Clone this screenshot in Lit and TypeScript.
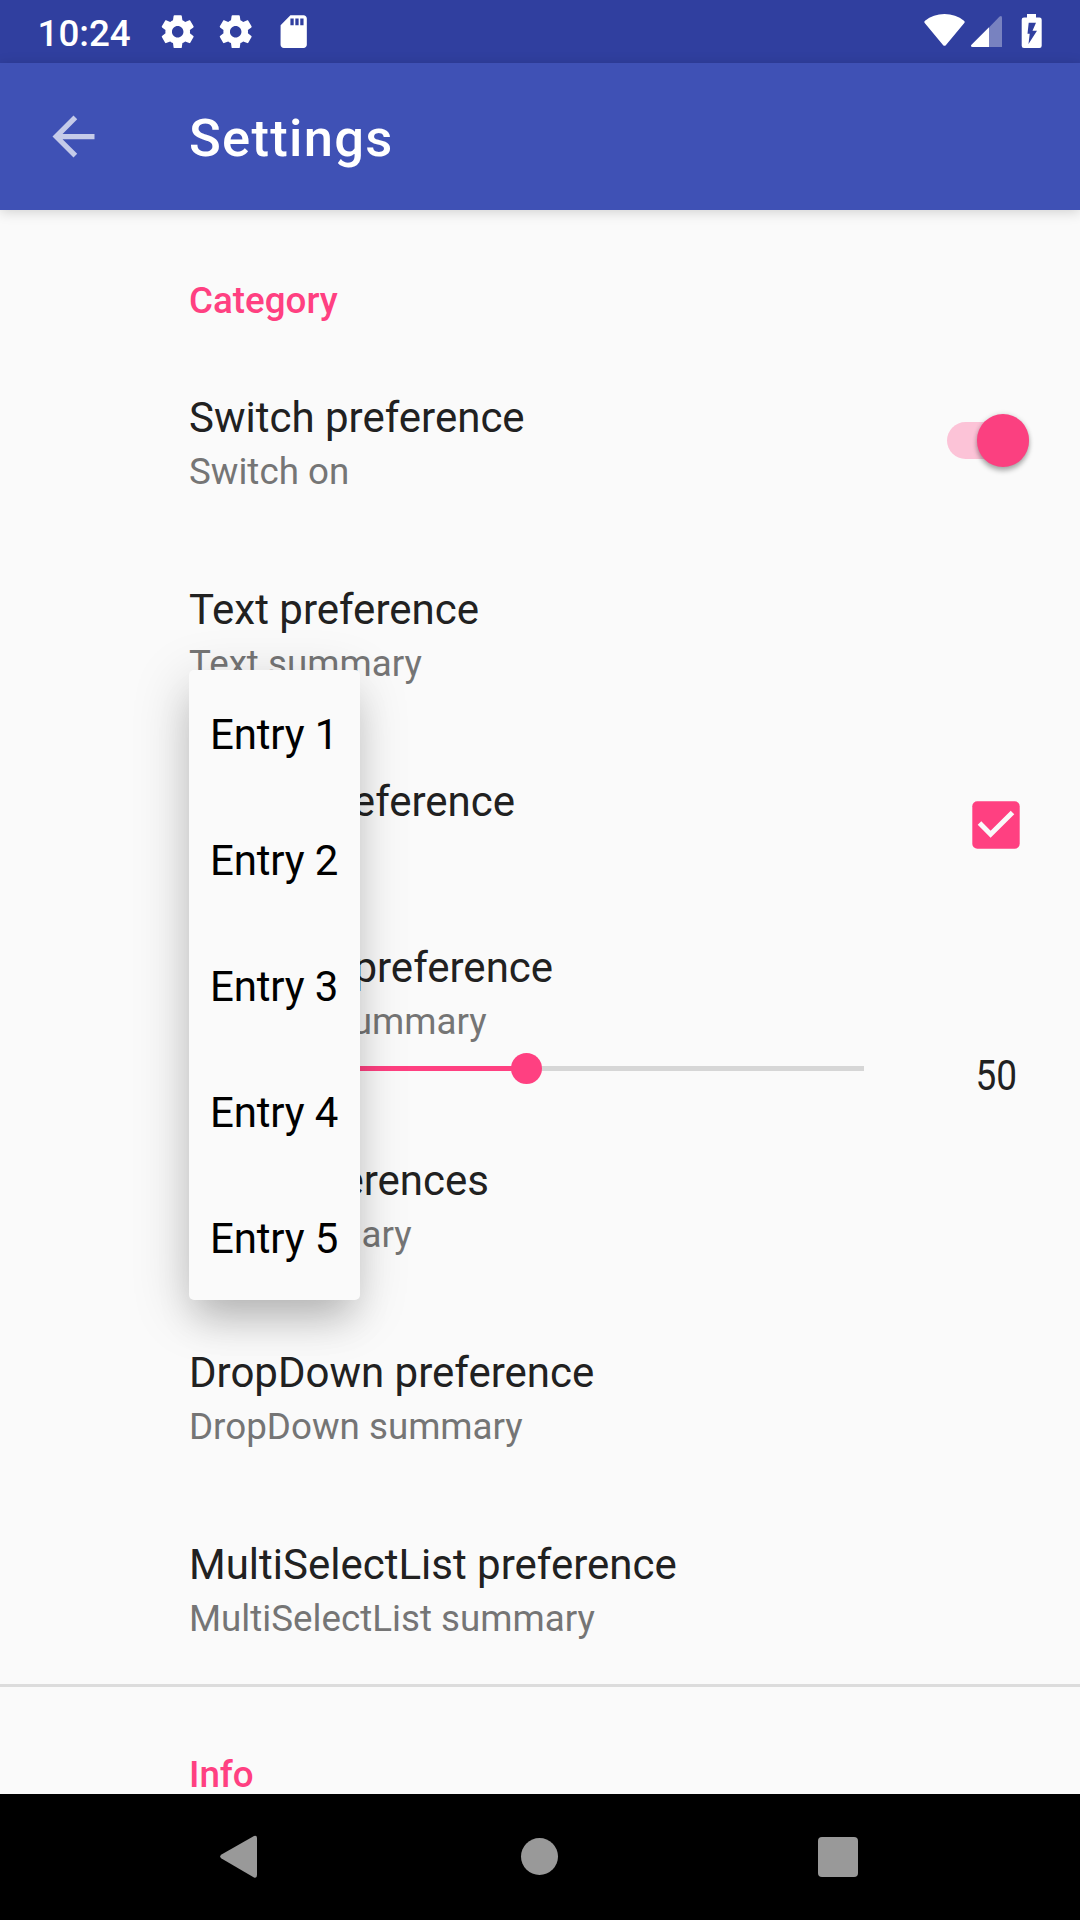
import { LitElement, html, css, svg, nothing } from "lit";
import { customElement, property } from "lit/decorators.js";

const GEAR =
  "M19.43 12.98c.04-.32.07-.64.07-.98s-.03-.66-.07-.98l2.11-1.65c.19-.15.24-.42.12-.64l-2-3.46c-.12-.22-.39-.3-.61-.22l-2.49 1c-.52-.4-1.08-.73-1.69-.98l-.38-2.65C14.46 2.18 14.25 2 14 2h-4c-.25 0-.46.18-.49.42l-.38 2.65c-.61.25-1.17.59-1.69.98l-2.49-1c-.23-.09-.49 0-.61.22l-2 3.46c-.13.22-.07.49.12.64l2.11 1.65c-.04.32-.07.65-.07.98s.03.66.07.98l-2.11 1.65c-.19.15-.24.42-.12.64l2 3.46c.12.22.39.3.61.22l2.49-1c.52.4 1.08.73 1.69.98l.38 2.65c.03.24.24.42.49.42h4c.25 0 .46-.18.49-.42l.38-2.65c.61-.25 1.17-.59 1.69-.98l2.49 1c.23.09.49 0 .61-.22l2-3.46c.12-.22.07-.49-.12-.64l-2.11-1.65zM12 15.5c-1.93 0-3.5-1.57-3.5-3.5s1.57-3.5 3.5-3.5 3.5 1.57 3.5 3.5-1.57 3.5-3.5 3.5z";

@customElement("status-bar")
class StatusBar extends LitElement {
  static styles = css`
    :host {
      display: flex;
      height: 63px;
      background: #303f9f;
      color: #fff;
      align-items: flex-start;
      font: 500 36.75px/43px Roboto, "Liberation Sans", sans-serif;
    }
    .clock {
      margin: 12px 0 0 37.5px;
      width: 120.5px;
    }
    .notes {
      display: flex;
      gap: 18.6px;
      margin-top: 11.7px;
    }
    .glyph {
      display: block;
      width: 39.4px;
      height: 39.4px;
      fill: #fff;
    }
    .system {
      display: block;
      margin-left: auto;
      width: 160px;
      height: 63px;
      fill: #fff;
    }
  `;
  render() {
    const gear = svg`<path d=${GEAR} />`;
    return html`
      <div class="clock">10:24</div>
      <div class="notes">
        <svg class="glyph" viewBox="0 0 24 24">${gear}</svg>
        <svg class="glyph" viewBox="0 0 24 24">${gear}</svg>
        <svg class="glyph" viewBox="0 0 24 24">
          <path d="M18 2h-8L4.02 8 4 20c0 1.1.9 2 2 2h12c1.1 0 2-.9 2-2V4c0-1.1-.9-2-2-2zm-6 6h-2V4h2v4zm3 0h-2V4h2v4zm3 0h-2V4h2v4z" />
        </svg>
      </div>
      <svg class="system" viewBox="920 0 160 63">
        <path d="M943.2 45.2 924.5 22.8Q923.800 21.6 925 20.8C930.5 16.3 937 14 944.5 14S958.5 16.3 964 20.8Q965.2 21.6 964.5 22.8L945.8 45.2Q944.5 46.5 943.2 45.2Z" />
        <path opacity=".35" d="M989 27.5 999.6 16.6Q1002 14.9 1002 18V47H989Z" />
        <path d="M989 27.3V47H972.5Q970 46.7 971.5 44.8Z" />
        <path fill-rule="evenodd" d="M1027 14H1036V17.5H1039.5Q1041.7 17.5 1041.7 19.7V45.7Q1041.7 48 1039.5 48H1024Q1021.7 48 1021.7 45.7V19.7Q1021.7 17.5 1024 17.5H1027ZM1028.7 22.7 1027.5 33.7H1029.7L1028.5 44 1037 30.8H1032.5L1036 22.7Z" />
      </svg>
    `;
  }
}

@customElement("preference-row")
class PreferenceRow extends LitElement {
  @property() heading = "";
  @property() summary = "";
  @property({ type: Boolean, reflect: true }) compact = false;

  static styles = css`
    :host {
      display: flex;
      box-sizing: border-box;
      height: 192px;
      padding: 49px 51px 0 189px;
    }
    :host([compact]) {
      height: 187px;
      padding-top: 23px;
    }
    .text {
      flex: 1;
      min-width: 0;
    }
    .heading {
      font-size: 42px;
      line-height: 49px;
      color: #212121;
      white-space: nowrap;
    }
    .summary {
      margin-top: 8px;
      font-size: 36.75px;
      line-height: 43px;
      color: #757575;
      white-space: nowrap;
    }
  `;
  render() {
    return html`
      <div class="text">
        <div class="heading">${this.heading}</div>
        ${this.summary ? html`<div class="summary">${this.summary}</div>` : nothing}
        <slot name="below"></slot>
      </div>
      <slot name="widget"></slot>
    `;
  }
}

@customElement("app-root")
class AppRoot extends LitElement {
  static styles = css`
    :host {
      display: flex;
      flex-direction: column;
      width: 1080px;
      height: 1920px;
      overflow: hidden;
      background: #fafafa;
      font-family: Roboto, "Liberation Sans", sans-serif;
    }
    .toolbar {
      position: relative;
      z-index: 1;
      display: flex;
      align-items: center;
      flex: none;
      height: 147px;
      background: #3f51b5;
      color: #fff;
      box-shadow: 0 2px 12px rgba(0, 0, 0, 0.17);
    }
    .arrow {
      width: 63px;
      height: 63px;
      margin: 0 84px 0 42px;
      fill: rgba(255, 255, 255, 0.7);
    }
    .title {
      font-size: 52.5px;
      font-weight: 500;
      line-height: 62px;
      letter-spacing: 1.3px;
      padding-top: 3px;
    }
    .content {
      position: relative;
      flex: 1;
      min-height: 0;
      overflow: hidden;
    }
    .category {
      box-sizing: border-box;
      height: 134px;
      padding: 69px 0 0 189px;
      color: #ff4081;
      font-size: 36.75px;
      font-weight: 500;
      line-height: 43px;
    }
    .divided {
      border-top: 3px solid #dcdcdc;
      padding-top: 66px;
      margin-top: 1px;
    }
    .switch {
      display: flex;
      align-items: center;
      justify-content: flex-end;
      box-sizing: border-box;
      width: 82.5px;
      height: 37px;
      margin-top: 29px;
      border-radius: 19px;
      background: #fcc3d7;
    }
    .thumb {
      flex: none;
      width: 52.5px;
      height: 52.5px;
      border-radius: 50%;
      background: #fb4080;
      box-shadow: 0 4px 5px rgba(0, 0, 0, 0.28), 0 0 5px rgba(0, 0, 0, 0.14);
    }
    .check {
      width: 48px;
      height: 48px;
      margin: 24px 9.5px 0 0;
    }
    .slider {
      display: flex;
      align-items: center;
      width: 675px;
      height: 31px;
      margin-top: 10px;
    }
    .filled {
      height: 5px;
      background: #ff4081;
    }
    .knob {
      flex: none;
      width: 31px;
      height: 31px;
      margin: 0 -15.5px;
      border-radius: 50%;
      background: #ff4081;
      z-index: 1;
    }
    .rest {
      flex: 1;
      height: 5px;
      background: #d6d6d6;
    }
    .value {
      padding: 108px 10px 0 0;
      font-size: 42px;
      line-height: 49px;
      color: #212121;
      transform: scaleX(0.88);
      transform-origin: 50% 50%;
    }
    .menu {
      position: absolute;
      left: 189px;
      top: 460px;
      width: 171px;
      height: 630px;
      border-radius: 5px;
      background: #fafafa;
      box-shadow: 0 26px 36px -8px rgba(0, 0, 0, 0.17), -4px 12px 54px rgba(0, 0, 0, 0.17);
    }
    .entry {
      display: flex;
      align-items: center;
      box-sizing: border-box;
      height: 126px;
      padding: 2px 0 0 21px;
      font-size: 42px;
      letter-spacing: -0.15px;
      color: #000;
    }
    .nav {
      flex: none;
      display: flex;
      align-items: center;
      justify-content: space-around;
      height: 126px;
      padding: 0 90px;
      background: #000;
    }
    .key {
      width: 60px;
      height: 60px;
      fill: #999;
    }
  `;

  private level = 50;

  render() {
    return html`
      <status-bar></status-bar>
      <header class="toolbar">
        <svg class="arrow" viewBox="0 0 24 24">
          <path d="M20 11H7.83l5.59-5.59L12 4l-8 8 8 8 1.41-1.41L7.83 13H20v-2z" />
        </svg>
        <div class="title">Settings</div>
      </header>
      <main class="content">
        <div class="category">Category</div>
        <preference-row heading="Switch preference" summary="Switch on">
          <div slot="widget" class="switch"><div class="thumb"></div></div>
        </preference-row>
        <preference-row heading="Text preference" summary="Text summary"></preference-row>
        <preference-row heading="Check preference" summary="Check on">
          <svg slot="widget" class="check" viewBox="0 0 48 48">
            <rect x=".3" y=".3" width="47.4" height="47.4" rx="5" fill="#ff4081" />
            <path d="M7.5 22 18.6 33.2 40.5 11.5" fill="none" stroke="#fafafa" stroke-width="5" />
          </svg>
        </preference-row>
        <preference-row compact heading="SeekBar preference" summary="SeekBar summary">
          <div slot="below" class="slider">
            <div class="filled" style="width:${this.level}%"></div>
            <div class="knob"></div>
            <div class="rest"></div>
          </div>
          <div slot="widget" class="value">${this.level}</div>
        </preference-row>
        <preference-row heading="List preferences" summary="List summary"></preference-row>
        <preference-row heading="DropDown preference" summary="DropDown summary"></preference-row>
        <preference-row heading="MultiSelectList preference" summary="MultiSelectList summary"></preference-row>
        <div class="category divided">Info</div>
        <div class="menu">
          ${[1, 2, 3, 4, 5].map((n) => html`<div class="entry">Entry ${n}</div>`)}
        </div>
      </main>
      <nav class="nav">
        <svg class="key" viewBox="0 0 60 60">
          <path d="M11.5 27.5 44 9Q47 8 47 11V48Q47 51.5 44 50.5L11.5 31.5Q8.8 29.5 11.5 27.5Z" />
        </svg>
        <svg class="key" viewBox="0 0 60 60"><circle cx="29.5" cy="29.5" r="18.5" /></svg>
        <svg class="key" viewBox="0 0 60 60"><rect x="8" y="10" width="40" height="40" rx="4" /></svg>
      </nav>
    `;
  }
}
